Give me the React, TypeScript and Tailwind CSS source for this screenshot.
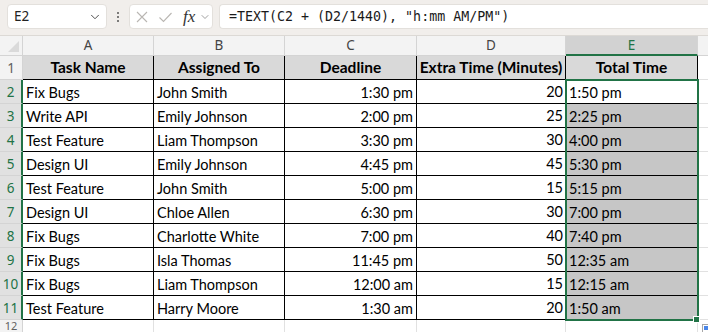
import React from 'react';
import { ChevronDown } from 'lucide-react';

type Row = [string, string, string, number, string];

const rows: Row[] = [
  ['Fix Bugs', 'John Smith', '1:30 pm', 20, '1:50 pm'],
  ['Write API', 'Emily Johnson', '2:00 pm', 25, '2:25 pm'],
  ['Test Feature', 'Liam Thompson', '3:30 pm', 30, '4:00 pm'],
  ['Design UI', 'Emily Johnson', '4:45 pm', 45, '5:30 pm'],
  ['Test Feature', 'John Smith', '5:00 pm', 15, '5:15 pm'],
  ['Design UI', 'Chloe Allen', '6:30 pm', 30, '7:00 pm'],
  ['Fix Bugs', 'Charlotte White', '7:00 pm', 40, '7:40 pm'],
  ['Fix Bugs', 'Isla Thomas', '11:45 pm', 50, '12:35 am'],
  ['Fix Bugs', 'Liam Thompson', '12:00 am', 15, '12:15 am'],
  ['Test Feature', 'Harry Moore', '1:30 am', 20, '1:50 am'],
];

const headers = ['Task Name', 'Assigned To', 'Deadline', 'Extra Time (Minutes)', 'Total Time'];
const letters = ['A', 'B', 'C', 'D', 'E'];

const cellFont = { fontFamily: 'Lato, "Liberation Sans", sans-serif' };
const uiFont = { fontFamily: '"Noto Sans", "Liberation Sans", sans-serif' };

function FormulaBar() {
  return (
    <div className="h-[36px] bg-[#f1eeeb] border-b border-[#dcd9d5] flex items-start pt-[4px] pl-[7px]" style={uiFont}>
      {/* Name box */}
      <div className="w-[100px] h-[25px] bg-white border border-[#e3e0dc] rounded-[4px] flex items-center justify-between pl-[6px] pr-[4px]">
        <span className="text-[13.5px] text-[#222]">E2</span>
        <ChevronDown className="w-[14px] h-[14px] text-[#444]" strokeWidth={1.6} />
      </div>
      {/* dots */}
      <div className="w-[22px] h-[25px] flex flex-col items-center justify-center gap-[2px]">
        <span className="w-[2px] h-[2px] bg-[#555] rounded-full" />
        <span className="w-[2px] h-[2px] bg-[#555] rounded-full" />
        <span className="w-[2px] h-[2px] bg-[#555] rounded-full" />
      </div>
      {/* cancel / enter / fx */}
      <div className="w-[84px] h-[25px] bg-white border border-[#e3e0dc] rounded-[4px] flex items-center pl-[5px]">
        <svg width="14" height="14" viewBox="0 0 14 14" className="mr-[9px]">
          <path d="M2 2 L12 12 M12 2 L2 12" stroke="#b9b6b2" strokeWidth="1.1" fill="none" />
        </svg>
        <svg width="15" height="14" viewBox="0 0 15 14" className="mr-[10px]">
          <path d="M1.5 7.5 L5.5 11.5 L13.5 3" stroke="#b9b6b2" strokeWidth="1.1" fill="none" />
        </svg>
        <span className="italic text-[17px] text-[#333] leading-none" style={{ fontFamily: '"Liberation Serif", serif' }}>
          fx
        </span>
        <ChevronDown className="w-[12px] h-[12px] text-[#777] ml-[4px]" strokeWidth={1.4} />
      </div>
      {/* formula input */}
      <div className="flex-1 ml-[6px] h-[25px] bg-white border border-r-0 border-[#e3e0dc] rounded-l-[4px] flex items-center pl-[9px]">
        <span className="text-[13.3px] text-[#1a1a1a] whitespace-pre" style={{ fontFamily: '"DejaVu Sans Mono", "Liberation Mono", monospace' }}>
          =TEXT(C2 + (D2/1440), "h:mm AM/PM")
        </span>
      </div>
    </div>
  );
}

export default function App() {
  return (
    <div className="w-[708px] h-[332px] overflow-hidden bg-white">
      <FormulaBar />
      <div
        className="relative grid grid-cols-[23px_131px_131px_132px_149px_132px_1fr] grid-rows-[20px_repeat(11,24px)_12px]"
        style={cellFont}
      >
        {/* corner */}
        <div className="bg-[#f3f3f3] border-r border-b border-[#d4d4d4] flex items-end justify-end p-[3px]">
          <svg width="11" height="11" viewBox="0 0 11 11">
            <path d="M11 0 L11 11 L0 11 Z" fill="#dadada" />
          </svg>
        </div>
        {letters.map((l) => (
          <div
            key={l}
            className={
              l === 'E'
                ? 'bg-[#d2d2d2] border-r border-[#d4d4d4] border-b-2 border-b-[#217346] text-[#217346] flex items-center justify-center text-[13.5px]'
                : 'bg-[#f3f3f3] border-r border-b border-[#d4d4d4] text-[#444] flex items-center justify-center text-[13.5px]'
            }
            style={uiFont}
          >
            {l}
          </div>
        ))}
        <div className="bg-[#f3f3f3] border-b border-[#d4d4d4]" />

        {/* row 1 */}
        <div className="bg-[#f3f3f3] border-r border-b border-[#d4d4d4] text-[#616161] text-[13.5px] flex items-end justify-center pb-[1px]" style={uiFont}>
          1
        </div>
        {headers.map((h) => (
          <div
            key={h}
            className="bg-[#d9d9d9] border-r border-b border-black flex items-end justify-center pb-[2px] text-[15.5px] font-bold text-black leading-[19px] whitespace-nowrap"
          >
            {h}
          </div>
        ))}
        <div className="border-b border-[#e1e1e1]" />

        {rows.map((r, i) => (
          <React.Fragment key={i}>
            <div
              className="bg-[#e1e1e1] border-b border-[#d4d4d4] border-r-2 border-r-[#217346] text-[#217346] text-[13.5px] flex items-end justify-center pb-[1px]"
              style={uiFont}
            >
              {i + 2}
            </div>
            <div className="border-r border-b border-black flex items-end pl-[3px] pb-[1px] text-[14.5px] leading-[18px] text-black whitespace-nowrap">{r[0]}</div>
            <div className="border-r border-b border-black flex items-end pl-[3px] pb-[1px] text-[14.5px] leading-[18px] text-black whitespace-nowrap">{r[1]}</div>
            <div className="border-r border-b border-black flex items-end justify-end pr-[3px] pb-[1px] text-[14.5px] leading-[18px] text-black whitespace-nowrap">{r[2]}</div>
            <div className="border-r border-b border-black flex items-end justify-end pr-[2px] pb-[2px] text-[14.5px] leading-[18px] text-black whitespace-nowrap">{r[3]}</div>
            <div
              className={
                (i === 0 ? 'bg-white ' : 'bg-[#c6c6c6] ') +
                'border-r border-b border-black flex items-end pl-[3px] pb-[1px] text-[14.5px] leading-[18px] text-black whitespace-nowrap'
              }
            >
              {r[4]}
            </div>
            <div className="border-b border-[#e1e1e1]" />
          </React.Fragment>
        ))}

        {/* row 12 (partly visible) */}
        <div className="bg-[#f3f3f3] border-r border-[#d4d4d4] text-[#616161] text-[11px] flex items-start justify-center leading-[11px] overflow-hidden" style={uiFont}>
          12
        </div>
        <div className="border-r border-[#e1e1e1]" />
        <div className="border-r border-[#e1e1e1]" />
        <div className="border-r border-[#e1e1e1]" />
        <div className="border-r border-[#e1e1e1]" />
        <div className="border-r border-[#e1e1e1]" />
        <div />

        {/* selection outline E2:E11 */}
        <div className="absolute left-[565px] top-[43px] w-[134px] h-[242px] border-2 border-[#217346] pointer-events-none" />
        {/* fill handle */}
        <div className="absolute left-[693px] top-[280px] w-[7px] h-[7px] bg-[#217346] border border-white" />
        {/* quick analysis */}
        <div className="absolute left-[702px] top-[288px] w-[12px] h-[12px] bg-white border border-[#a6a6a6] p-[1px]">
          <div className="w-full h-[4px] bg-[#4a86e8]" />
        </div>
      </div>
    </div>
  );
}
